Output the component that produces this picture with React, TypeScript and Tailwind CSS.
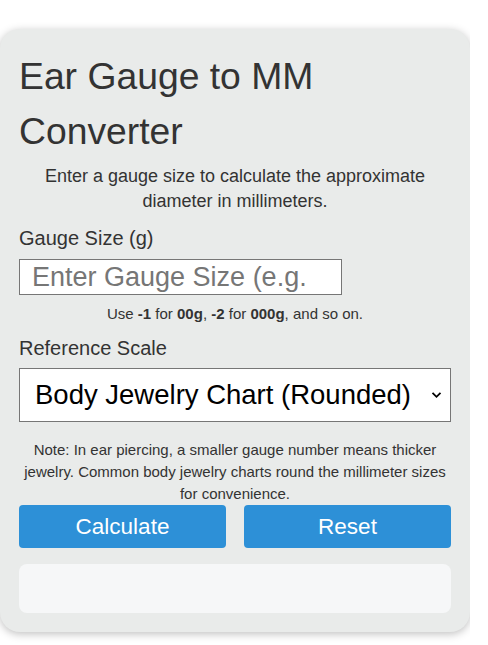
export default function App() {
  return (
    <div className="w-[470px] overflow-hidden pt-[29px] pb-3 font-['Liberation_Sans',Arial,sans-serif]">
      <div className="w-[470px] rounded-[20px] bg-[#e9ebea] px-[19px] pt-[20px] pb-[19px] text-[#333] shadow-[0_2px_8px_rgba(0,0,0,0.25)]">
        <h1 className="text-[37.3px] leading-[55px] font-normal">
          Ear Gauge to MM Converter
        </h1>
        <p className="mt-[5px] px-[4px] text-center text-[18px] leading-[25px]">
          Enter a gauge size to calculate the approximate diameter in
          millimeters.
        </p>

        <label className="mt-[11px] block text-[20px] leading-[26px]">
          Gauge Size (g)
        </label>
        <input
          type="text"
          placeholder="Enter Gauge Size (e.g. 14)"
          className="mt-[8px] block h-[36px] w-[323px] border border-[#767676] bg-white pr-[30px] pl-[12px] text-[27px] text-black placeholder:text-[#767676] outline-none"
        />
        <p className="mt-[9px] text-center text-[15px] leading-[20px]">
          Use <b>-1</b> for <b>00g</b>, <b>-2</b> for <b>000g</b>, and so on.
        </p>

        <label className="mt-[11px] block text-[20px] leading-[26px]">
          Reference Scale
        </label>
        <div className="relative mt-[7px] h-[54px] w-full border border-[#767676] bg-white">
          <select className="h-full w-full appearance-none bg-transparent pl-[15px] text-[27.5px] text-black outline-none">
            <option>Body Jewelry Chart (Rounded)</option>
          </select>
          <svg
            className="pointer-events-none absolute top-[22px] right-[8px]"
            width="11"
            height="8"
            viewBox="0 0 11 8"
          >
            <path
              d="M1.5 1.8 L5.5 5.8 L9.5 1.8"
              fill="none"
              stroke="#000"
              strokeWidth="1.8"
            />
          </svg>
        </div>

        <p className="mt-[17px] text-center text-[15px] leading-[22px]">
          Note: In ear piercing, a smaller gauge number means thicker jewelry.
          Common body jewelry charts round the millimeter sizes for convenience.
        </p>

        <div className="mt-0 flex gap-[18px]">
          <button className="h-[43px] flex-1 rounded-[4px] bg-[#2d90d7] text-[22.5px] text-white">
            Calculate
          </button>
          <button className="h-[43px] flex-1 rounded-[4px] bg-[#2d90d7] text-[22.5px] text-white">
            Reset
          </button>
        </div>

        <div className="mt-[16px] h-[49px] rounded-[8px] bg-[#f6f7f8]" />
      </div>
    </div>
  );
}
